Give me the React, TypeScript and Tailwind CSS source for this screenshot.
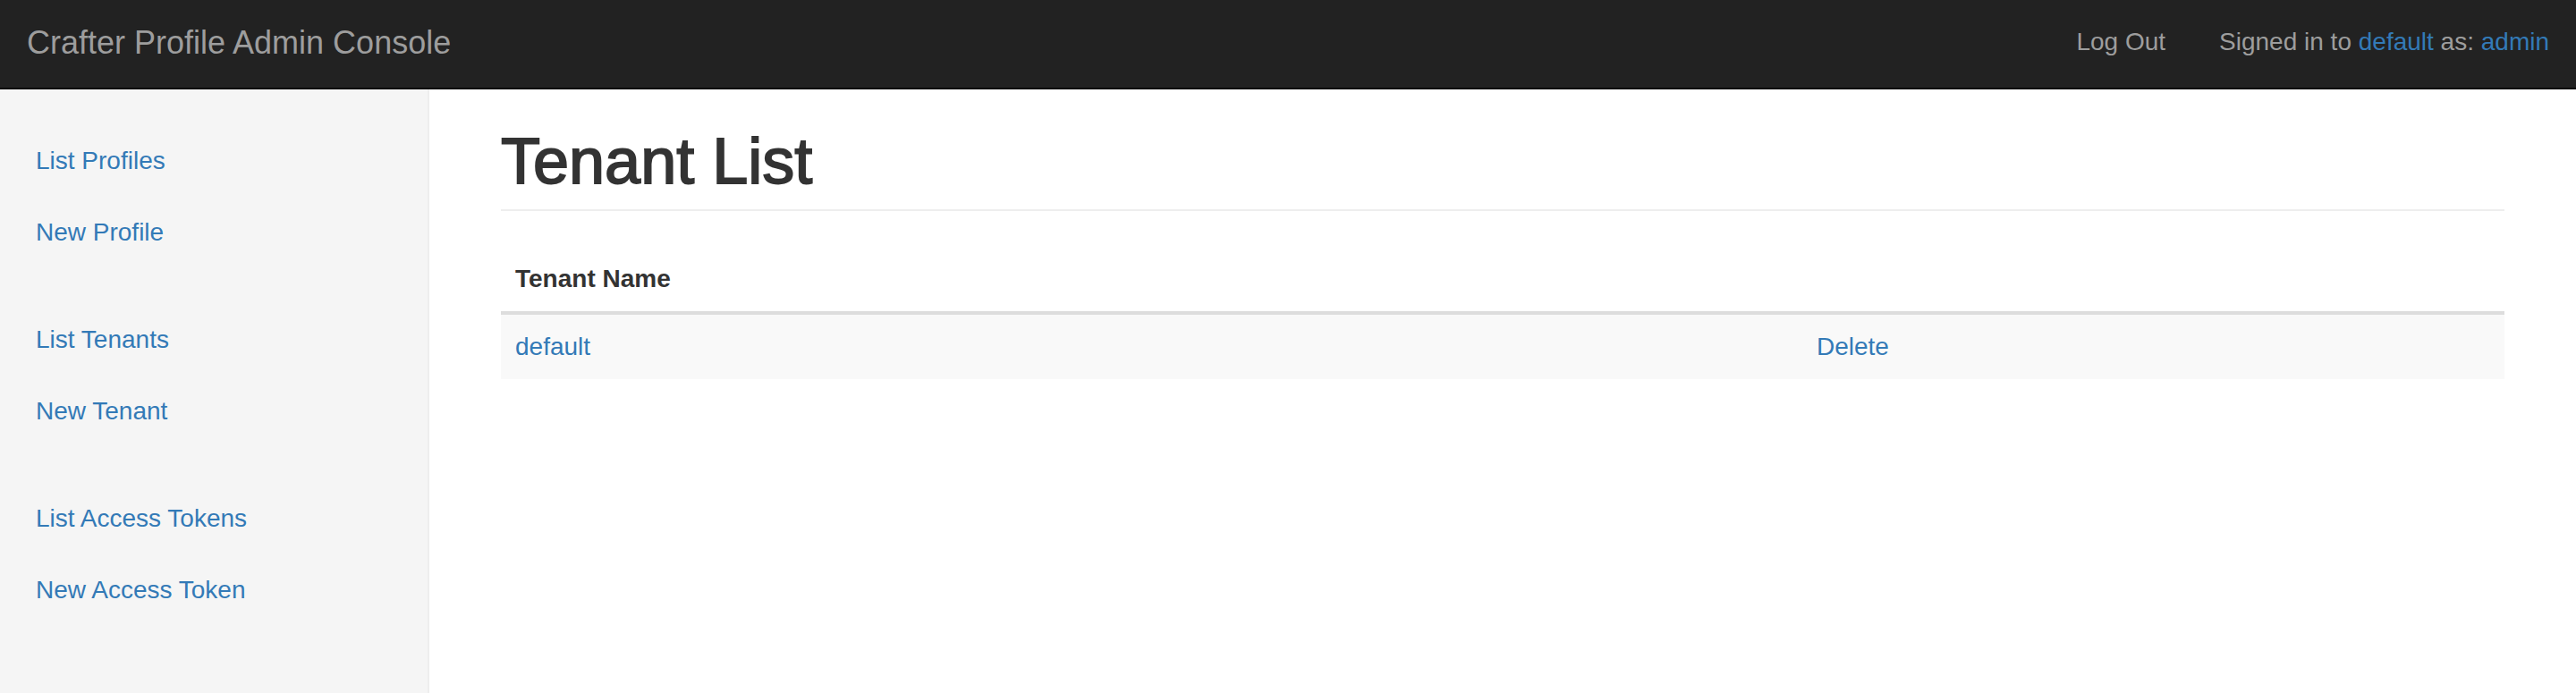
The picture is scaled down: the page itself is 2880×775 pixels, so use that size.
const sideNav: string[][] = [
  ["List Profiles", "New Profile"],
  ["List Tenants", "New Tenant"],
  ["List Access Tokens", "New Access Token"],
];

const tenants = ["default"];

const App: React.FC = () => {
  return (
    <div className="flex h-screen flex-col bg-white font-['Liberation_Sans',Arial,sans-serif] text-[#333]">
      <header className="flex h-[100px] shrink-0 items-start justify-between border-b-2 border-[#080808] bg-[#222]">
        <a className="pl-[30px] pt-[28px] text-[36px] leading-[40px] text-[#9d9d9d]">
          Crafter Profile Admin Console
        </a>
        <div className="flex items-start pr-[30px] pt-[27px] text-[28px] leading-[40px] text-[#9d9d9d]">
          <a className="px-[30px]">Log Out</a>
          <p className="ml-[30px]">
            Signed in to <a className="text-[#337ab7]">default</a> as:{" "}
            <a className="text-[#337ab7]">admin</a>
          </p>
        </div>
      </header>

      <div className="flex min-h-0 flex-1">
        <aside className="w-[480px] shrink-0 border-r-2 border-[#eee] bg-[#f5f5f5] pt-[40px]">
          {sideNav.map((group, i) => (
            <ul key={i} className="mb-[40px]">
              {group.map((item) => (
                <li key={item}>
                  <a className="block px-[40px] py-[20px] text-[28px] leading-[40px] text-[#337ab7]">
                    {item}
                  </a>
                </li>
              ))}
            </ul>
          ))}
        </aside>

        <main className="flex-1 px-[80px] pt-[40px]">
          {/* medium weight: Liberation has no 500, so thicken the regular face a little */}
          <h1 className="border-b-2 border-[#eee] pb-[14px] text-[72px] font-normal leading-[80px] text-[#333] [-webkit-text-stroke:1.8px_#333]">
            Tenant List
          </h1>

          <table className="mt-[40px] w-full border-collapse text-[28px] leading-[40px]">
            <thead>
              <tr className="border-b-4 border-[#ddd]">
                <th className="w-[1455px] p-[16px] text-left font-bold">Tenant Name</th>
                <th className="p-[16px]"></th>
              </tr>
            </thead>
            <tbody>
              {tenants.map((t) => (
                <tr key={t} className="bg-[#f9f9f9]">
                  <td className="p-[16px]">
                    <a className="text-[#337ab7]">{t}</a>
                  </td>
                  <td className="p-[16px]">
                    <a className="text-[#337ab7]">Delete</a>
                  </td>
                </tr>
              ))}
            </tbody>
          </table>
        </main>
      </div>
    </div>
  );
};

export default App;
